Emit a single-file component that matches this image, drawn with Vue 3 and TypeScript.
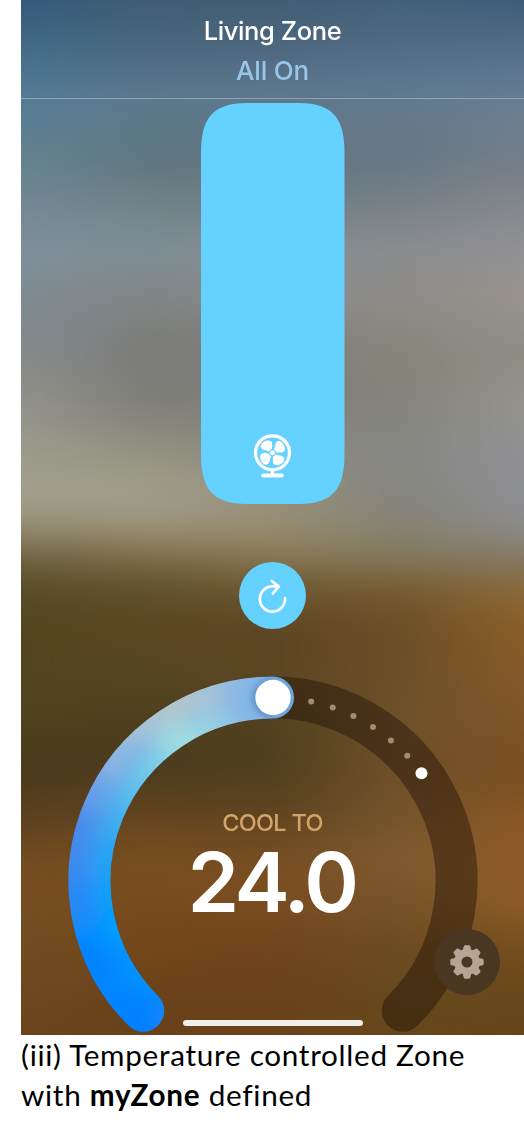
<script setup lang="ts">
interface Point { x: number; y: number }
interface Blot extends Point { color: string; r: number }

const stops = [0, 50, 97, 110, 160, 200, 250, 300, 350, 400, 450, 490, 515, 535, 560, 590, 630, 680, 720, 770, 820, 860, 900, 950, 1000, 1035]
const columns: string[][] = [
  ['#34587a', '#446d8a', '#557c97', '#597d94', '#64838f', '#728793', '#81909b', '#7f8b92', '#858a8c', '#93928b', '#9b9b8e', '#a3a18d', '#9d9781', '#8c8163', '#6b6140', '#584c27', '#53451f', '#52451f', '#50431f', '#493a1c', '#5d4121', '#744c20', '#774e23', '#704d22', '#6c4820', '#6b451c'],
  ['#3f5d72', '#49697f', '#5d7a8e', '#5c7a8c', '#5f767f', '#6f8187', '#7f8f98', '#808583', '#7b7b79', '#7d7d7a', '#93917f', '#a09e8d', '#a19a85', '#95896c', '#796a45', '#5f4f2c', '#5c4621', '#554523', '#4d3f1d', '#4b3c1e', '#67451f', '#78501f', '#784b1e', '#734719', '#6a411a', '#69421b'],
  ['#405d72', '#50687f', '#5f7a90', '#5f788a', '#647581', '#6f7c85', '#858e93', '#87898a', '#807e78', '#807f79', '#8c8a7f', '#96937f', '#989078', '#95896a', '#857650', '#6b5530', '#5c4523', '#5d4723', '#52401f', '#4f3f1f', '#614520', '#784e22', '#7c4e22', '#70431c', '#6b421a', '#69421b'],
  ['#40607a', '#526d85', '#5f7b92', '#667a8d', '#667883', '#757f87', '#8c8d8f', '#8f8d8a', '#87847a', '#84847b', '#868684', '#85857f', '#858378', '#86806c', '#83775a', '#75592f', '#6b4e27', '#6b5027', '#6f522a', '#6f5029', '#76552c', '#805b30', '#76532a', '#6c4c21', '#66481e', '#67481c'],
  ['#3b5c78', '#566f87', '#657e94', '#6b7e91', '#747d88', '#84868c', '#929294', '#98938f', '#8e8d84', '#95948c', '#919194', '#8f9094', '#8c8d90', '#8b8880', '#827662', '#8b6a38', '#8a5d26', '#85592a', '#80552a', '#7a4e22', '#8a5824', '#8e5b25', '#8f5d26', '#744d1d', '#66481b', '#66461a'],
]
const strip = (c: string[]) => `linear-gradient(${c.map((v, i) => `${v} ${stops[i]}px`).join(',')})`

// Angles are degrees clockwise from the top of the dial.
const polar = (deg: number): Point => ({
  x: 205 + 183.5 * Math.sin((deg * Math.PI) / 180),
  y: 205 - 183.5 * Math.cos((deg * Math.PI) / 180),
})
const arc = (a: number, b: number): string => {
  const p = polar(a)
  const q = polar(b)
  return `M${p.x} ${p.y}A183.5 183.5 0 ${b - a > 180 ? 1 : 0} 1 ${q.x} ${q.y}`
}
const ticks = [12, 19, 26, 33, 40, 47].map(polar)
const target = polar(54)

const blots: Blot[] = [
  { x: 215, y: 10, color: '#72a8e2', r: 30 },
  { x: 172, y: 20, color: '#84b6e6', r: 26 },
  { x: 136, y: 14, color: '#a4c2d8', r: 24 },
  { x: 146, y: 62, color: '#98d2e4', r: 24 },
  { x: 102, y: 22, color: '#b4c6c8', r: 24 },
  { x: 112, y: 70, color: '#a0dde2', r: 25 },
  { x: 68, y: 44, color: '#a8c2d4', r: 24 },
  { x: 90, y: 98, color: '#7cd0e8', r: 24 },
  { x: 38, y: 78, color: '#90b6e2', r: 24 },
  { x: 70, y: 124, color: '#5cc2ed', r: 23 },
  { x: 12, y: 112, color: '#699de7', r: 25 },
  { x: 58, y: 154, color: '#3cb0f0', r: 23 },
  { x: -2, y: 150, color: '#4a88ea', r: 26 },
  { x: 50, y: 184, color: '#24a6f1', r: 23 },
  { x: -4, y: 190, color: '#4089ee', r: 26 },
  { x: 50, y: 216, color: '#0ca2f7', r: 23 },
  { x: 0, y: 226, color: '#2587f5', r: 24 },
  { x: 58, y: 250, color: '#00a0ff', r: 22 },
]
const teeth = [0, 45, 90, 135, 180, 225, 270, 315]
const blades = [0, 90, 180, 270]
</script>

<template>
  <main class="page">
    <section class="screen">
      <div class="backdrop">
        <div v-for="(c, i) in columns" :key="i" class="strip" :class="`strip-${i}`" :style="{ backgroundImage: strip(c) }"></div>
        <div class="haze"></div>
      </div>
      <header class="bar">
        <h1 class="title">Living Zone</h1>
        <p class="status">All On</p>
      </header>
      <svg class="slider" width="144" height="401" viewBox="0 0 144 401">
        <path fill="#65d1ff" d="M0 50C0 17 10 0 46 0H97.5C133.5 0 143.5 17 143.5 50V351C143.5 384 133.5 401 97.5 401H46C10 401 0 384 0 351Z" />
        <g transform="translate(71.5 349.8)" fill="#fff">
          <circle r="17" fill="none" stroke="#fff" stroke-width="3.3" />
          <path v-for="b in blades" :key="b" :transform="`rotate(${b})`" d="M-.6 -2.8C-.6 -5 .1 -7.5 -.5 -10C-1.1 -12.2 -3.6 -12.7 -6 -12.1C-9.8 -11.1 -12.2 -8.4 -11.8 -5.7C-11.5 -3.6 -9.2 -3 -7 -2.6C-5 -2.2 -3.5 -1.6 -2.8 -.6Z" />
          <circle r="3.1" stroke="#65d1ff" stroke-width="1.2" />
          <path d="M-1.7 18H1.7V20.6H9.3A2 2 0 0 1 9.3 24.6H-9.3A2 2 0 0 1 -9.3 20.6H-1.7Z" />
        </g>
      </svg>
      <button class="refresh" aria-label="Refresh">
        <svg width="67" height="67" viewBox="0 0 67 67" fill="none" stroke="#fff" stroke-width="2.7" stroke-linecap="round" stroke-linejoin="round">
          <path d="M46 36.2A12.6 12.6 0 1 1 33.4 24.4H39.6M32.8 19L39.8 24.6L33.8 31.3" />
        </svg>
      </button>
      <div class="dial">
        <svg width="410" height="359" viewBox="0 0 410 359">
          <defs>
            <filter id="soft" x="-30%" y="-30%" width="160%" height="160%"><feGaussianBlur stdDeviation="11" /></filter>
            <filter id="shade" x="-50%" y="-50%" width="200%" height="200%"><feGaussianBlur stdDeviation="3" /></filter>
            <linearGradient id="cool" x1="0" y1="0" x2="0" y2="359" gradientUnits="userSpaceOnUse">
              <stop offset="0" stop-color="#a0c4df" />
              <stop offset=".4" stop-color="#4a9cee" />
              <stop offset=".72" stop-color="#058eff" />
              <stop offset="1" stop-color="#007fff" />
            </linearGradient>
            <mask id="band" maskUnits="userSpaceOnUse" x="-5" y="-5" width="420" height="370">
              <path :d="arc(-135, 0)" fill="none" stroke="#fff" stroke-width="42" stroke-linecap="round" />
            </mask>
          </defs>
          <path :d="arc(-5, 135)" class="track" />
          <g mask="url(#band)">
            <rect width="260" height="359" fill="url(#cool)" />
            <g filter="url(#soft)">
              <circle v-for="(b, i) in blots" :key="i" :cx="b.x" :cy="b.y" :r="b.r" :fill="b.color" />
              <circle cx="14" cy="286" r="20" fill="#0080ff" />
              <circle cx="80" cy="290" r="20" fill="#009aff" />
              <circle cx="100" cy="342" r="11" fill="#3d88ee" />
            </g>
            <circle cx="203" cy="22.5" r="19" fill="#4779b5" opacity=".6" filter="url(#shade)" />
            <path d="M205 2A20 20 0 0 1 205 41" fill="none" stroke="#6da5de" stroke-width="4" />
          </g>
          <circle cx="205" cy="21.5" r="17.7" fill="#fff" />
          <circle v-for="(t, i) in ticks" :key="i" :cx="t.x" :cy="t.y" r="3" fill="#a58b6c" />
          <circle :cx="target.x" :cy="target.y" r="6" fill="#fff" />
        </svg>
        <div class="reading">
          <span class="mode">COOL TO</span>
          <strong class="degrees">24.0</strong>
        </div>
      </div>
      <button class="settings" aria-label="Settings">
        <svg width="36" height="36" viewBox="-18 -18 36 36" fill="#b5a595">
          <path v-for="t in teeth" :key="t" :transform="`rotate(${t})`" d="M-4.6 -10.5L-3.3 -15.4Q-3 -16.7 -1.8 -16.7H1.8Q3 -16.7 3.3 -15.4L4.6 -10.5Z" />
          <circle r="9.2" fill="none" stroke="#b5a595" stroke-width="7.4" />
        </svg>
      </button>
      <div class="home"></div>
    </section>
    <p class="caption"><span class="line">(iii) Temperature controlled Zone</span><span class="line">with <b>myZone</b> defined</span></p>
  </main>
</template>

<style>
body { margin: 0; background: #fff; }
</style>

<style scoped>
.page { width: 524px; height: 1134px; overflow: hidden; background: #fff; font-family: Inter, "Liberation Sans", sans-serif; }
.screen { position: relative; display: flex; flex-direction: column; align-items: center; width: 503px; height: 1035px; margin-left: 21px; overflow: hidden; }
.backdrop, .strip, .haze { position: absolute; inset: 0; }
.haze { backdrop-filter: blur(14px); }
.strip-1 { mask-image: linear-gradient(90deg, transparent 0, #000 126px); }
.strip-2 { mask-image: linear-gradient(90deg, transparent 126px, #000 252px); }
.strip-3 { mask-image: linear-gradient(90deg, transparent 252px, #000 377px); }
.strip-4 { mask-image: linear-gradient(90deg, transparent 377px, #000 503px); }
.bar { position: relative; box-sizing: border-box; width: 100%; height: 99px; padding-top: 11px; border-bottom: 1px solid rgba(190, 205, 215, .5); text-align: center; }
.title { margin: 0; font-size: 25.5px; line-height: 40px; font-weight: 500; letter-spacing: -.4px; color: #fff; }
.status { margin: 0; font-size: 26px; line-height: 40px; font-weight: 500; letter-spacing: -.2px; color: #98c5ea; }
.slider { position: relative; flex: none; margin-top: 3.5px; }
button { padding: 0; border: 0; border-radius: 50%; }
.refresh { position: relative; flex: none; width: 67px; height: 67px; margin-top: 58.5px; background: #65d1ff; }
.refresh svg, .slider, .dial svg { display: block; }
.dial { position: relative; flex: none; width: 409px; height: 359px; margin: 46.5px 0 0; }
.track { fill: none; stroke: rgba(28, 15, 4, .43); stroke-width: 42; stroke-linecap: round; }
.reading { position: absolute; inset: 131px 0 auto; display: flex; flex-direction: column; align-items: center; }
.mode { font-size: 23.5px; line-height: 32px; font-weight: 500; letter-spacing: -.7px; color: #d2a469; }
.degrees { margin-right: 2px; font-size: 83px; line-height: 86px; font-weight: 600; letter-spacing: -3.4px; color: #fff; }
.settings { position: absolute; left: 413px; top: 929px; display: grid; place-items: center; width: 66px; height: 66px; background: #4a3721; }
.home { position: absolute; left: 161.5px; top: 1020px; width: 180px; height: 5.5px; border-radius: 3px; background: #f2eeea; }
.caption { margin: 0 0 0 21px; font-family: Lato, sans-serif; font-size: 29.7px; line-height: 40px; letter-spacing: .7px; color: #000; white-space: nowrap; }
.line { display: block; }
</style>
